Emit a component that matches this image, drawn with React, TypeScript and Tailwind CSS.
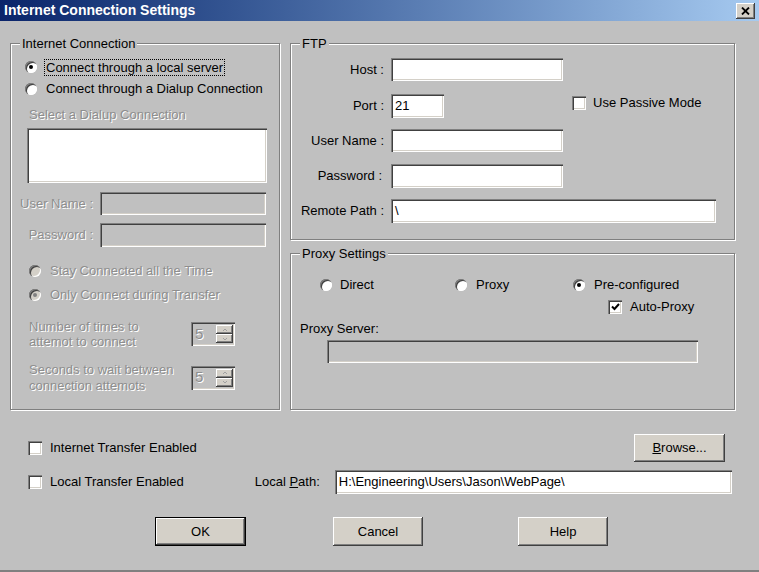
import type { ReactNode } from "react";

const sunken =
  "shadow-[inset_1px_1px_0_#808080,inset_2px_2px_0_#404040,inset_-1px_-1px_0_#ffffff,inset_-2px_-2px_0_#d4d0c8]";
const raised =
  "shadow-[inset_-1px_-1px_0_#404040,inset_1px_1px_0_#ffffff,inset_-2px_-2px_0_#808080,inset_2px_2px_0_#d4d0c8]";
const dim = "text-[#8e8e8e] [text-shadow:1px_1px_0_#ffffff]";

function Field({ className = "", children, disabled }: { className?: string; children?: ReactNode; disabled?: boolean }) {
  return (
    <div className={`${sunken} ${disabled ? "bg-[#c0c0c0]" : "bg-white"} flex items-center pl-[4px] text-[13px] ${className}`}>
      {children}
    </div>
  );
}

function Radio({ checked, disabled }: { checked?: boolean; disabled?: boolean }) {
  return (
    <span
      className={`relative grid h-[12px] w-[12px] shrink-0 place-items-center rounded-full ${disabled ? "bg-[#d4d0c8]" : "bg-white"} shadow-[inset_1px_1px_0_#808080,inset_2px_2px_0_#404040,inset_-1px_-1px_0_#ffffff]`}
    >
      {checked && <span className={`h-[4px] w-[4px] rounded-full ${disabled ? "bg-[#808080]" : "bg-black"}`} />}
    </span>
  );
}

function Check({ checked }: { checked?: boolean }) {
  return (
    <span className={`grid h-[14px] w-[14px] shrink-0 place-items-center bg-white ${sunken}`}>
      {checked && (
        <svg width="9" height="8" viewBox="0 0 9 8">
          <path d="M1 3.5 L3.5 6 L8 1" fill="none" stroke="#000" strokeWidth="2" />
        </svg>
      )}
    </span>
  );
}

function Button({ children, className = "", primary }: { children: ReactNode; className?: string; primary?: boolean }) {
  return (
    <div className={`${primary ? "border border-black" : ""} ${className}`}>
      <div className={`flex h-full w-full items-center justify-center bg-[#d4d0c8] text-[13px] ${raised}`}>{children}</div>
    </div>
  );
}

function Group({ label, className = "", children }: { label: string; className?: string; children: ReactNode }) {
  return (
    <div className={`relative border border-[#808080] shadow-[inset_1px_1px_0_#ffffff,1px_1px_0_#ffffff] ${className}`}>
      <span className="absolute -top-[8px] left-[9px] bg-[#c0c0c0] px-[2px] text-[13px] leading-[15px]">{label}</span>
      {children}
    </div>
  );
}

function Spinner() {
  return (
    <div className={`flex h-[24px] w-[44px] items-center justify-between bg-[#c0c0c0] pl-[4px] pr-[2px] ${sunken}`}>
      <span className={`text-[15px] ${dim}`}>5</span>
      <div className="flex flex-col">
        {["M3 4 L5 2 L7 4", "M3 2 L5 4 L7 2"].map((d) => (
          <div key={d} className={`flex h-[9px] w-[17px] items-center justify-center bg-[#d4d0c8] ${raised}`}>
            <svg width="10" height="6" viewBox="0 0 10 6">
              <path d={d} fill="none" stroke="#a0a0a0" strokeWidth="1" />
            </svg>
          </div>
        ))}
      </div>
    </div>
  );
}

export default function App() {
  return (
    <div className="flex h-[572px] w-[759px] flex-col overflow-hidden border-b-2 border-[#808080] bg-[#c0c0c0] font-['Liberation_Sans',Arial,sans-serif] text-black">
      <div className="flex h-[21px] shrink-0 items-center justify-between bg-gradient-to-r from-[#0a246a] to-[#a6caf0] pl-[4px] pr-[4px]">
        <span className="text-[14px] font-bold text-white">Internet Connection Settings</span>
        <div className={`grid h-[16px] w-[19px] place-items-center bg-[#d4d0c8] ${raised}`}>
          <svg width="9" height="8" viewBox="0 0 9 8">
            <path d="M1 0.5 L8 7.5 M8 0.5 L1 7.5" stroke="#000" strokeWidth="1.8" />
          </svg>
        </div>
      </div>

      <div className="flex pl-[10px] pt-[22px]">
        <Group label="Internet Connection" className="h-[367px] w-[270px]">
          <div className="flex flex-col pl-[14px] text-[13px]">
            <div className="mt-[14px] flex h-[18px] items-center">
              <Radio checked />
              <span className="ml-[7px] border border-dotted border-black px-[1px] leading-[15px]">Connect through a local server</span>
            </div>
            <div className="mt-[4px] flex h-[18px] items-center">
              <Radio />
              <span className="ml-[9px]">Connect through a Dialup Connection</span>
            </div>
            <div className={`ml-[4px] mt-[7px] h-[16px] ${dim}`}>Select a Dialup Connection</div>
            <div className={`ml-[2px] mt-[7px] h-[55px] w-[240px] bg-white ${sunken}`} />
            <div className="-ml-[14px] mt-[9px] flex h-[23px] items-center">
              <span className={`w-[82px] text-right ${dim}`}>User Name :</span>
              <Field disabled className="ml-[7px] h-[23px] w-[166px]" />
            </div>
            <div className="-ml-[14px] mt-[8px] flex h-[24px] items-center">
              <span className={`w-[82px] text-right ${dim}`}>Password :</span>
              <Field disabled className="ml-[7px] h-[24px] w-[166px]" />
            </div>
            <div className="ml-[4px] mt-[15px] flex h-[18px] items-center">
              <Radio disabled />
              <span className={`ml-[9px] ${dim}`}>Stay Connected all the Time</span>
            </div>
            <div className="ml-[4px] mt-[6px] flex h-[18px] items-center">
              <Radio checked disabled />
              <span className={`ml-[9px] ${dim}`}>Only Connect during Transfer</span>
            </div>
            <div className="ml-[4px] mt-[15px] flex h-[30px] items-center">
              <span className={`w-[162px] leading-[15px] ${dim}`}>
                Number of times to
                <br />
                attemot to connect
              </span>
              <Spinner />
            </div>
            <div className="ml-[4px] mt-[13px] flex h-[31px] items-center">
              <span className={`w-[162px] leading-[16px] ${dim}`}>
                Seconds to wait between
                <br />
                connection attemots
              </span>
              <Spinner />
            </div>
          </div>
        </Group>

        <div className="ml-[10px] flex w-[445px] flex-col">
          <Group label="FTP" className="h-[197px]">
            <div className="flex flex-col text-[13px]">
              <div className="mt-[14px] flex h-[23px] items-center">
                <span className="w-[93px] text-right">Host :</span>
                <Field className="ml-[7px] h-[23px] w-[172px]" />
              </div>
              <div className="mt-[13px] flex h-[24px] items-center">
                <span className="w-[93px] text-right">Port :</span>
                <Field className="ml-[7px] h-[24px] w-[53px]">21</Field>
                <div className="ml-[128px] -mt-[6px] flex items-center">
                  <Check />
                  <span className="ml-[7px]">Use Passive Mode</span>
                </div>
              </div>
              <div className="mt-[11px] flex h-[23px] items-center">
                <span className="w-[93px] text-right">User Name :</span>
                <Field className="ml-[7px] h-[23px] w-[172px]" />
              </div>
              <div className="mt-[12px] flex h-[24px] items-center">
                <span className="w-[91px] text-right">Password :</span>
                <Field className="ml-[9px] h-[24px] w-[172px]" />
              </div>
              <div className="mt-[11px] flex h-[24px] items-center">
                <span className="w-[93px] text-right">Remote Path :</span>
                <Field className="ml-[7px] h-[24px] w-[325px]">\</Field>
              </div>
            </div>
          </Group>

          <Group label="Proxy Settings" className="mt-[13px] h-[157px]">
            <div className="flex flex-col text-[13px]">
              <div className="ml-[29px] mt-[22px] flex h-[18px] items-center">
                <div className="flex w-[135px] items-center">
                  <Radio />
                  <span className="ml-[8px]">Direct</span>
                </div>
                <div className="flex w-[118px] items-center">
                  <Radio />
                  <span className="ml-[9px]">Proxy</span>
                </div>
                <div className="flex items-center">
                  <Radio checked />
                  <span className="ml-[9px]">Pre-configured</span>
                </div>
              </div>
              <div className="ml-[317px] mt-[4px] flex h-[18px] items-center">
                <Check checked />
                <span className="ml-[8px]">Auto-Proxy</span>
              </div>
              <div className="ml-[9px] mt-[3px] h-[16px]">Proxy Server:</div>
              <Field disabled className="ml-[36px] mt-[5px] h-[23px] w-[371px]" />
            </div>
          </Group>
        </div>
      </div>

      <div className="flex flex-col pl-[28px] text-[13px]">
        <div className="mt-[24px] flex h-[28px] items-center">
          <Check />
          <span className="ml-[8px]">Internet Transfer Enabled</span>
          <Button className="ml-auto mr-[34px] h-[28px] w-[91px]">
            <span>
              <span className="underline">B</span>rowse...
            </span>
          </Button>
        </div>
        <div className="mt-[8px] flex h-[24px] items-center">
          <Check />
          <span className="ml-[8px]">Local Transfer Enabled</span>
          <span className="ml-[71px]">
            Local <span className="underline">P</span>ath:
          </span>
          <Field className="ml-[15px] h-[24px] w-[397px]">H:\Engineering\Users\Jason\WebPage\</Field>
        </div>
        <div className="mt-[23px] flex h-[29px] items-center">
          <Button primary className="ml-[127px] h-[29px] w-[91px]">
            OK
          </Button>
          <Button className="ml-[87px] h-[29px] w-[90px]">Cancel</Button>
          <Button className="ml-[95px] h-[29px] w-[90px]">Help</Button>
        </div>
      </div>
    </div>
  );
}
